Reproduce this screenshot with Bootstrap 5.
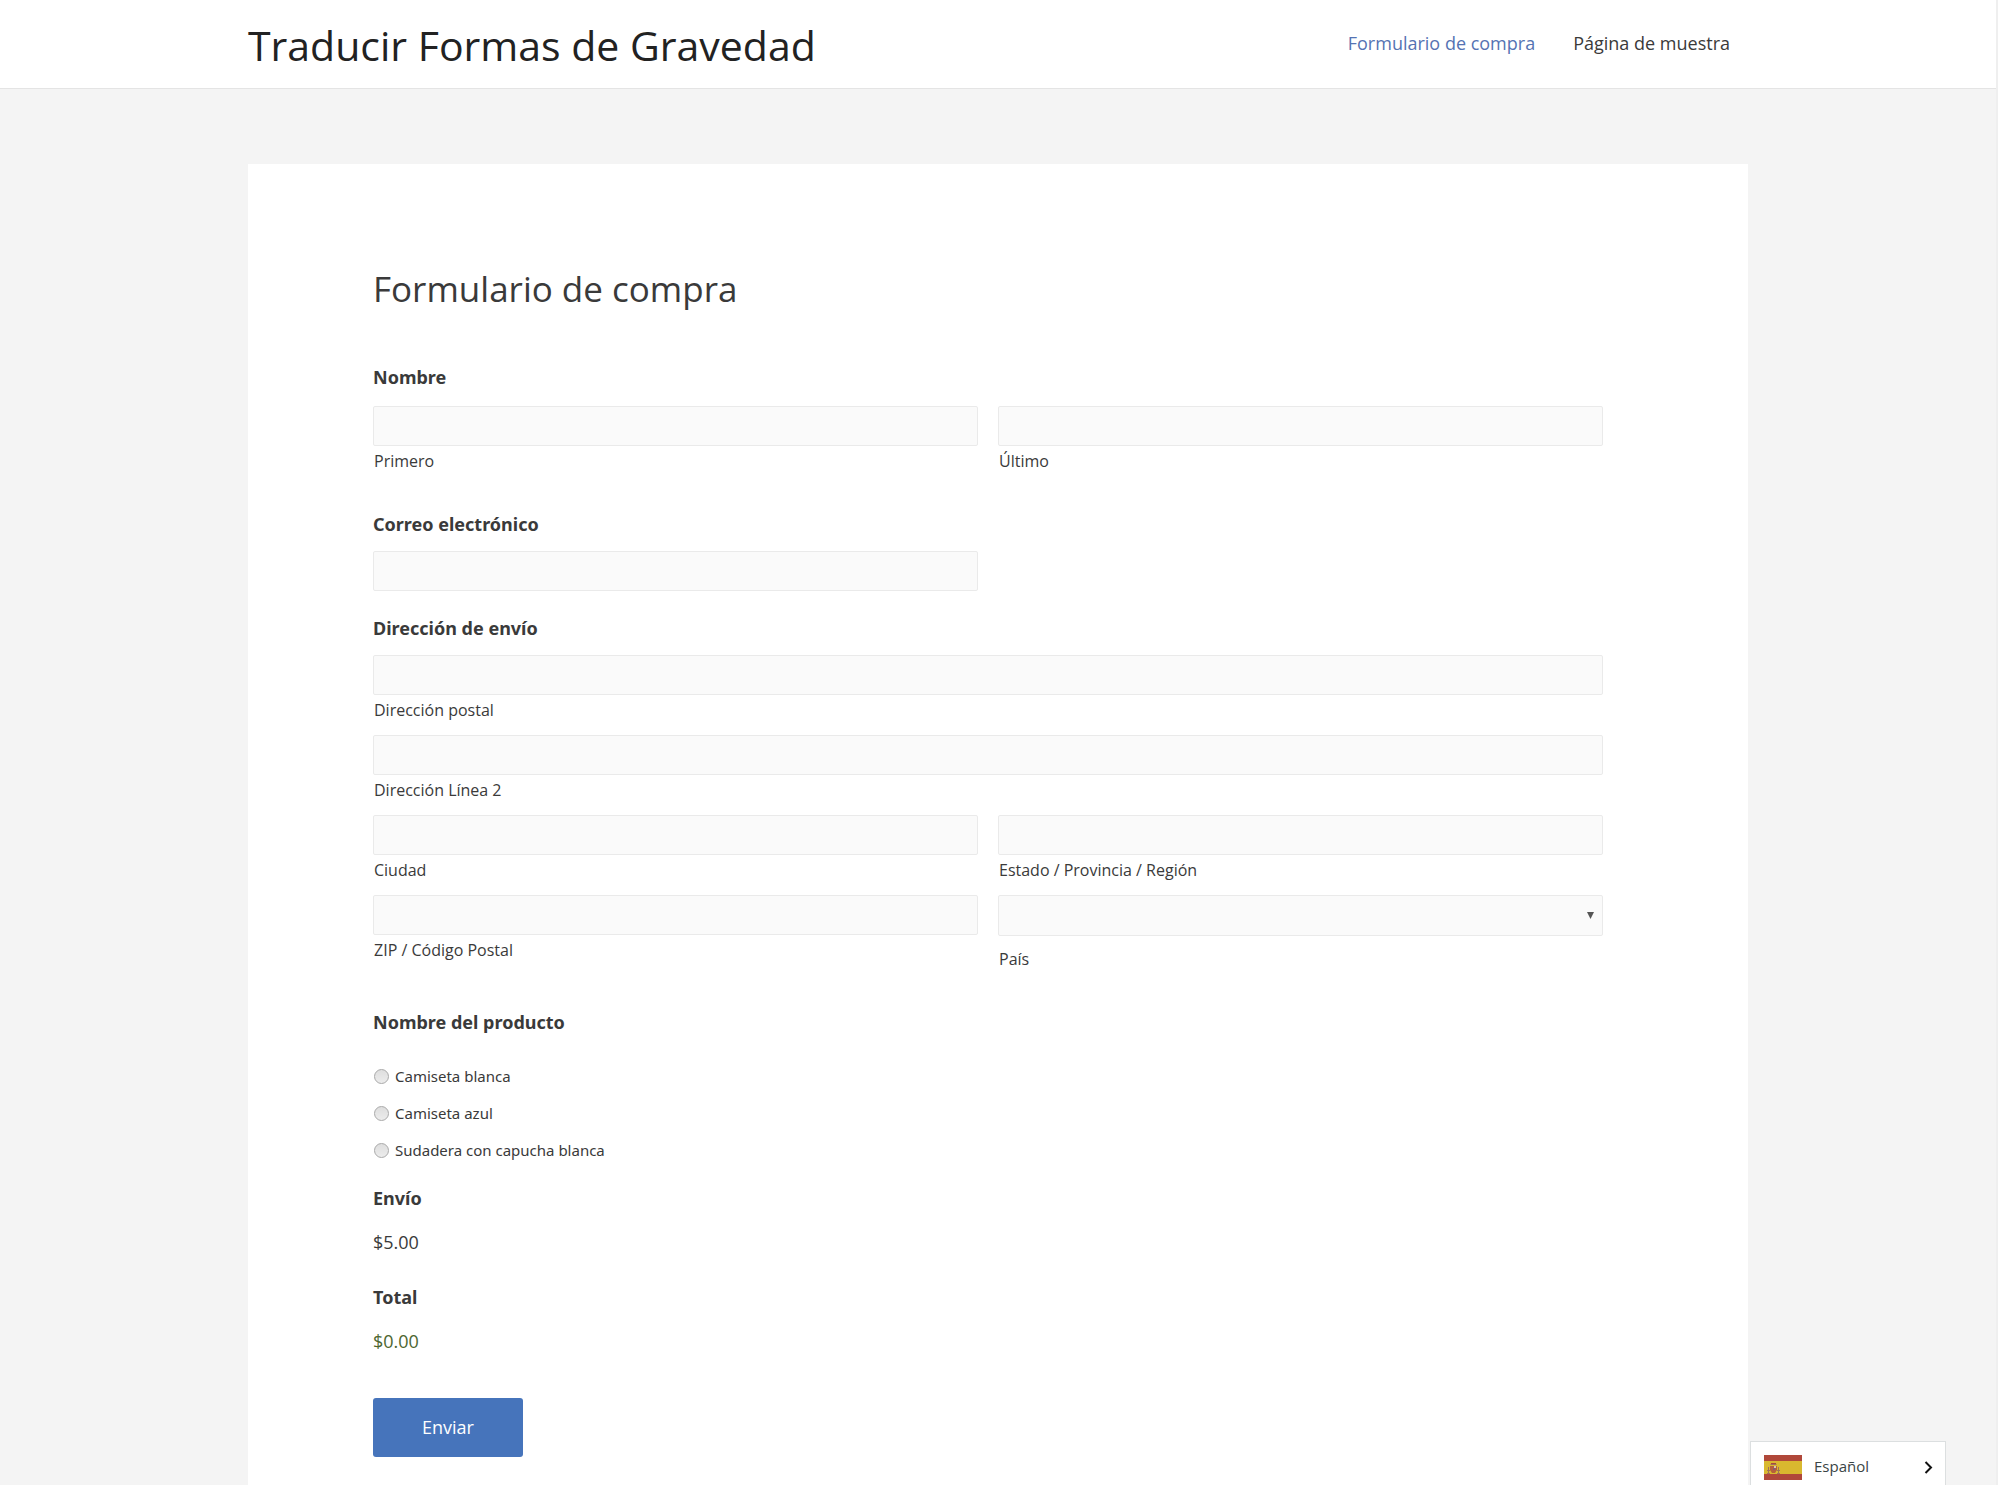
<!DOCTYPE html>
<html lang="es">
<head>
<meta charset="utf-8">
<meta name="viewport" content="width=device-width, initial-scale=1">
<title>Formulario de compra</title>
<link href="https://cdn.jsdelivr.net/npm/bootstrap@5.3.0/dist/css/bootstrap.min.css" rel="stylesheet">
<style>
  body { font-family: "Open Sans", "Noto Sans", sans-serif; font-size: 18px; line-height: 28px; color: #3a3a3a; background: #f4f4f4; border-right: 2px solid #efefef; }
  .site-wrap { max-width: 1500px; width: 100%; }
  .site-header { background: #fff; border-bottom: 1px solid #e4e4e4; }
  .site-header .navbar { min-height: 88px; padding: 0; }
  .site-title { font-size: 41px; line-height: 56px; color: #222; padding: 2px 0 0; }
  .site-title:hover { color: #222; }
  .site-menu { gap: 38px; padding: 0 18px 2px 0; }
  .site-menu .nav-link { color: #3a3a3a; }
  .site-menu .nav-link.active { color: #5573b3; }
  .entry { background: #fff; margin-top: 75px; padding: 98px 145px 28px 125px; }
  .entry-title { font-size: 35px; line-height: 54px; font-weight: 400; margin-bottom: 47px; }
  .field-title { font-family: "Noto Sans", "Open Sans", sans-serif; font-size: 18px; line-height: 28px; font-weight: 700; margin-bottom: 13px; }
  .compound { --bs-gutter-x: 20px; --bs-gutter-y: 14px; }
  .name-row { --bs-gutter-y: 0; padding-top: 2px; }
  .field-box { height: 40px; border: 1px solid #eaeaea; border-radius: 2px; background-color: #fafafa; }
  select.field-box { height: 41px; appearance: none; background-repeat: no-repeat; }
  .select-wrap { position: relative; }
  .select-wrap svg { position: absolute; right: 9px; top: 17px; pointer-events: none; }
  .sub-label { display: block; font-size: 16px; line-height: 20px; margin: 5px 0 1px 1px; }
  .select-wrap + .sub-label { margin-top: 13px; }
  .gap-wide { margin-bottom: 38px; }
  .gap-mid { margin-bottom: 23px; }
  .choices { gap: 15px; padding-top: 16px; }
  .choice { display: flex; align-items: center; gap: 6px; font-family: "Noto Sans", "Open Sans", sans-serif; font-size: 15px; line-height: 22px; min-height: 22px; padding: 0 0 0 1px; margin: 0; }
  .choice .form-check-input { float: none; width: 15px; height: 15px; margin: 1px 0 0; border: 1px solid #a9a9a9; background: linear-gradient(#dedede, #ececec); }
  .choice .form-check-input:checked { background: #4674bb; }
  .amount { display: block; padding-top: 3px; }
  .total-amount { color: #4d6630; }
  .btn-send { margin-top: 43px; width: 150px; height: 59px; border-radius: 3px; border: 0; font-size: 18px; color: #fff; background: #4674bb; }
  .btn-send:hover { color: #fff; background: #3a66aa; }
  .lang-switch { right: 52px; bottom: 0; width: 196px; height: 44px; padding: 8px 12px 0 13px; background: #fff; border: 1px solid #dcdfe0; border-bottom: 0; border-radius: 0; font-size: 15px; color: #3a4545; }
</style>
</head>
<body class="d-flex flex-column min-vh-100">
<header class="site-header">
  <div class="site-wrap mx-auto">
    <nav class="navbar navbar-expand justify-content-between" aria-label="Principal">
      <a class="navbar-brand site-title m-0" href="#">Traducir Formas de Gravedad</a>
      <ul class="navbar-nav site-menu">
        <li class="nav-item"><a class="nav-link p-0 active" aria-current="page" href="#">Formulario de compra</a></li>
        <li class="nav-item"><a class="nav-link p-0" href="#">Página de muestra</a></li>
      </ul>
    </nav>
  </div>
</header>

<main class="site-wrap mx-auto entry flex-grow-1">
  <h1 class="entry-title">Formulario de compra</h1>
  <form>
    <fieldset class="gap-wide">
      <legend class="field-title">Nombre</legend>
      <div class="row compound name-row">
        <div class="col-6"><input class="form-control field-box" type="text" id="first"><label class="sub-label" for="first">Primero</label></div>
        <div class="col-6"><input class="form-control field-box" type="text" id="last"><label class="sub-label" for="last">Último</label></div>
      </div>
    </fieldset>

    <div class="gap-mid">
      <label class="field-title d-block" for="email">Correo electrónico</label>
      <div class="row compound"><div class="col-6"><input class="form-control field-box" type="email" id="email"></div></div>
    </div>

    <fieldset class="gap-wide">
      <legend class="field-title">Dirección de envío</legend>
      <div class="row compound">
        <div class="col-12 mt-0"><input class="form-control field-box" type="text" id="street"><label class="sub-label" for="street">Dirección postal</label></div>
        <div class="col-12"><input class="form-control field-box" type="text" id="street2"><label class="sub-label" for="street2">Dirección Línea 2</label></div>
        <div class="col-6"><input class="form-control field-box" type="text" id="city"><label class="sub-label" for="city">Ciudad</label></div>
        <div class="col-6"><input class="form-control field-box" type="text" id="state"><label class="sub-label" for="state">Estado / Provincia / Región</label></div>
        <div class="col-6"><input class="form-control field-box" type="text" id="zip"><label class="sub-label" for="zip">ZIP / Código Postal</label></div>
        <div class="col-6">
          <div class="select-wrap">
            <select class="form-control field-box" id="country"><option value=""></option><option>España</option><option>México</option></select>
            <svg width="7" height="7" viewBox="0 0 7 7" aria-hidden="true"><path d="M0 0h7L3.500 7z" fill="#555"/></svg>
          </div>
          <label class="sub-label" for="country">País</label>
        </div>
      </div>
    </fieldset>

    <fieldset class="gap-mid">
      <legend class="field-title">Nombre del producto</legend>
      <div class="d-flex flex-column choices">
        <div class="form-check choice"><input class="form-check-input" type="radio" name="product" id="p1"><label for="p1">Camiseta blanca</label></div>
        <div class="form-check choice"><input class="form-check-input" type="radio" name="product" id="p2"><label for="p2">Camiseta azul</label></div>
        <div class="form-check choice"><input class="form-check-input" type="radio" name="product" id="p3"><label for="p3">Sudadera con capucha blanca</label></div>
      </div>
    </fieldset>

    <div class="gap-mid pb-1">
      <div class="field-title">Envío</div>
      <span class="amount">$5.00</span>
    </div>
    <div>
      <div class="field-title">Total</div>
      <output class="amount total-amount">$0.00</output>
    </div>
    <button class="btn btn-send" type="submit">Enviar</button>
  </form>
</main>

<button class="lang-switch position-fixed d-flex align-items-center" type="button">
  <svg width="38" height="25" viewBox="0 0 38 25" aria-hidden="true">
    <path fill="#b0483a" d="M0 0h38v25H0z"/><path fill="#d9b82f" d="M0 6h38v13H0z"/>
    <path fill="#b5603c" d="M6 11h7v4l-2 3H8l-2-3z"/><path fill="#a0705a" d="M4 12h1v6H4zM14 12h1v6h-1zM6 10l1-1h5l1 1zM3 15h3v1H3zM13 15h3v1h-3zM3 18h3v1H3zM13 18h3v1h-3z"/><path fill="#a8483c" d="M7 8h5v1H7z"/><path fill="#d8c9b0" d="M10 11h2v2h-2z"/><path fill="#8b5a70" d="M9 13h2v2H9z"/>
  </svg>
  <span class="ms-2 ps-1 pb-1">Español</span>
  <svg class="ms-auto" width="9" height="13" viewBox="0 0 9 13" fill="none" stroke="#111" stroke-width="2" aria-hidden="true"><path d="M1.500 1 7 6.500 1.500 12"/></svg>
</button>
<script src="https://cdn.jsdelivr.net/npm/bootstrap@5.3.0/dist/js/bootstrap.bundle.min.js"></script>
</body>
</html>
